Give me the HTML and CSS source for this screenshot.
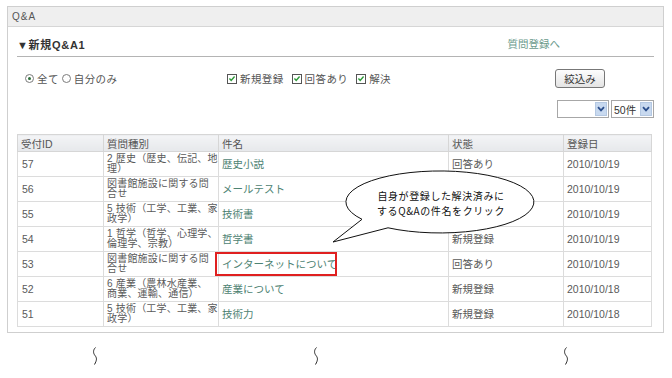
FILE: index.html
```html
<!DOCTYPE html>
<html lang="ja">
<head>
<meta charset="utf-8">
<title>Q&amp;A</title>
<link rel="stylesheet" href="styles.css">
</head>
<body>
<div class="page">
  <div class="panel">
    <div class="panel-head">Q&amp;A</div>
    <div class="panel-body">
      <div class="section-title">
        <span class="title">▼新規Q&amp;A1</span>
        <a class="link reg">質問登録へ</a>
      </div>
      <div class="filter">
        <div class="radios">
          <label class="opt"><span class="radio on"></span>全て</label>
          <label class="opt"><span class="radio"></span>自分のみ</label>
        </div>
        <div class="checks">
          <label class="opt"><span class="check"><svg viewBox="0 0 9 9" width="9" height="9"><path d="M1.6 4.6 L3.6 6.6 L7.4 2.2" fill="none" stroke="#2f9a3a" stroke-width="1.6"/></svg></span>新規登録</label>
          <label class="opt"><span class="check"><svg viewBox="0 0 9 9" width="9" height="9"><path d="M1.6 4.6 L3.6 6.6 L7.4 2.2" fill="none" stroke="#2f9a3a" stroke-width="1.6"/></svg></span>回答あり</label>
          <label class="opt"><span class="check"><svg viewBox="0 0 9 9" width="9" height="9"><path d="M1.6 4.6 L3.6 6.6 L7.4 2.2" fill="none" stroke="#2f9a3a" stroke-width="1.6"/></svg></span>解決</label>
        </div>
        <button class="btn">絞込み</button>
      </div>
      <div class="selects">
        <div class="sel w1"><span class="val"></span><span class="arrow"><svg viewBox="0 0 8 6" width="8" height="6"><path d="M1 1.2 L4 4.4 L7 1.2" fill="none" stroke="#2c4f8c" stroke-width="1.8"/></svg></span></div>
        <div class="sel w2"><span class="val">50件</span><span class="arrow"><svg viewBox="0 0 8 6" width="8" height="6"><path d="M1 1.2 L4 4.4 L7 1.2" fill="none" stroke="#2c4f8c" stroke-width="1.8"/></svg></span></div>
      </div>
      <table class="list">
        <colgroup>
          <col class="c1"><col class="c2"><col class="c3"><col class="c4"><col class="c5">
        </colgroup>
        <thead>
          <tr><th>受付ID</th><th>質問種別</th><th>件名</th><th>状態</th><th>登録日</th></tr>
        </thead>
        <tbody>
          <tr><td>57</td><td class="kind">2 歴史（歴史、伝記、地<br>理）</td><td><a class="link">歴史小説</a></td><td>回答あり</td><td>2010/10/19</td></tr>
          <tr><td>56</td><td class="kind">図書館施設に関する問<br>合せ</td><td><a class="link">メールテスト</a></td><td></td><td>2010/10/19</td></tr>
          <tr><td>55</td><td class="kind">5 技術（工学、工業、家<br>政学）</td><td><a class="link">技術書</a></td><td></td><td>2010/10/19</td></tr>
          <tr><td>54</td><td class="kind">1 哲学（哲学、心理学、<br>倫理学、宗教）</td><td><a class="link">哲学書</a></td><td>新規登録</td><td>2010/10/19</td></tr>
          <tr><td>53</td><td class="kind">図書館施設に関する問<br>合せ</td><td class="mark"><a class="link">インターネットについて</a><span class="hilite"></span></td><td>回答あり</td><td>2010/10/19</td></tr>
          <tr><td>52</td><td class="kind">6 産業（農林水産業、<br>商業、運輸、通信）</td><td><a class="link">産業について</a></td><td>新規登録</td><td>2010/10/18</td></tr>
          <tr><td>51</td><td class="kind">5 技術（工学、工業、家<br>政学）</td><td><a class="link">技術力</a></td><td>新規登録</td><td>2010/10/18</td></tr>
        </tbody>
      </table>
    </div>
  </div>
  <div class="breaks">
    <svg class="brk b1" viewBox="0 0 6 18" width="6" height="18"><path d="M3.5 0.5 C1 3, 1 6, 3 8.5 S 5 13, 2.5 17.5" fill="none" stroke="#222" stroke-width="1"/></svg>
    <svg class="brk b2" viewBox="0 0 6 18" width="6" height="18"><path d="M3.5 0.5 C1 3, 1 6, 3 8.5 S 5 13, 2.5 17.5" fill="none" stroke="#222" stroke-width="1"/></svg>
    <svg class="brk b3" viewBox="0 0 6 18" width="6" height="18"><path d="M3.5 0.5 C1 3, 1 6, 3 8.5 S 5 13, 2.5 17.5" fill="none" stroke="#222" stroke-width="1"/></svg>
  </div>
  <div class="bubble">
    <svg class="bubble-shape" viewBox="0 0 210 80" width="210" height="80">
      <path d="M32 51.3 L3 74 L58 59.8 A94 31 0 1 0 32 51.3 Z" fill="#fff" stroke="#111" stroke-width="1"/>
    </svg>
    <div class="bubble-text">自身が登録した解決済みに<br>するQ&amp;Aの件名をクリック</div>
  </div>
</div>
</body>
</html>
```

FILE: styles.css
```css
* { box-sizing: border-box; }
html, body { margin: 0; padding: 0; background: #fff; }
body {
  font-family: "Liberation Sans", "Noto Sans CJK JP", sans-serif;
  font-size: 11px;
  color: #555;
}
.page {
  position: relative;
  width: 672px;
  height: 378px;
  padding-top: 6px;
}
.panel {
  margin-left: 7px;
  width: 657px;
  border: 1px solid #cfcfcf;
}
.panel-head {
  height: 20px;
  line-height: 20px;
  padding-left: 4px;
  background: #efefef;
  border-bottom: 1px solid #d6d6d6;
  font-size: 10px;
  letter-spacing: 1px;
  color: #555;
}
.panel-body {
  padding: 0 11px 5px 9px;
}
.section-title {
  display: flex;
  align-items: center;
  height: 30px;
  padding-top: 4px;
  border-bottom: 1px solid #b4b4b4;
  margin-right: -2px;
}
.title {
  font-weight: bold;
  font-size: 11px;
  letter-spacing: 0.7px;
  color: #333;
}
.link { color: #4e8373; text-decoration: none; }
.reg {
  margin-left: auto;
  margin-right: 94px;
  font-size: 10.5px;
  color: #6b9a8c;
}
.filter {
  display: flex;
  align-items: center;
  height: 19px;
  margin-top: 12px;
  padding-left: 8px;
}
.radios { display: flex; width: 202px; gap: 3px; }
.checks { display: flex; gap: 8px; }
.opt {
  display: flex;
  align-items: center;
  gap: 3px;
  font-size: 10.5px;
  letter-spacing: 0.4px;
  color: #555;
}
.radio {
  width: 9px;
  height: 9px;
  border: 1px solid #7c7c7c;
  border-radius: 50%;
  background: #fff;
  position: relative;
}
.radio.on::after {
  content: "";
  position: absolute;
  left: 2px;
  top: 2px;
  width: 3px;
  height: 3px;
  border-radius: 50%;
  background: #2c6e3a;
}
.check {
  width: 10px;
  height: 10px;
  border: 1px solid #555;
  background: #fff;
  display: flex;
  align-items: center;
  justify-content: center;
}
.check svg { display: block; }
.btn {
  margin-left: auto;
  margin-right: 47px;
  width: 50px;
  height: 19px;
  padding: 0;
  border: 1px solid #777;
  border-radius: 3px;
  background: linear-gradient(#fdfdfd, #e4e4e4);
  font-family: "Noto Sans CJK JP", sans-serif;
  font-size: 10.5px;
  color: #333;
}
.selects {
  display: flex;
  justify-content: flex-end;
  gap: 2px;
  margin-top: 12px;
  margin-right: -2px;
  height: 18px;
}
.sel {
  display: flex;
  align-items: center;
  height: 18px;
  border: 1px solid #a7a7a7;
  background: #fff;
  padding: 1px;
}
.sel.w1 { width: 52px; }
.sel.w2 { width: 43px; }
.sel .val {
  flex: 1;
  font-size: 10.5px;
  color: #333;
  padding-left: 1px;
}
.arrow {
  width: 12px;
  height: 14px;
  background: #c8d9ef;
  border: 1px solid #b4c8e2;
  display: flex;
  align-items: center;
  justify-content: center;
}
.arrow svg { display: block; }
.list {
  margin-top: 16px;
  width: 634px;
  border-collapse: collapse;
  table-layout: fixed;
  border: 1px solid #d2d2d2;
}
.c1 { width: 86px; }
.c2 { width: 115px; }
.c3 { width: 230px; }
.c4 { width: 115px; }
.c5 { width: 88px; }
.list th {
  height: 17px;
  padding: 0 3px;
  text-align: left;
  font-weight: normal;
  font-size: 10.5px;
  color: #555;
  background: linear-gradient(#f3f4f6, #e6e8eb);
  border: 1px solid #d6d6d6;
}
.list td {
  height: 25px;
  padding: 0 3px;
  font-size: 10.5px;
  line-height: 11px;
  color: #5a5a5a;
  border: 1px solid #dcdcdc;
  vertical-align: middle;
  white-space: nowrap;
}
.list td.kind {
  font-size: 10px;
  line-height: 10.5px;
  letter-spacing: 0.2px;
}
.list td:first-child { padding-left: 4px; }
.mark { position: relative; }
.hilite {
  position: absolute;
  left: -4px;
  top: 0;
  width: 122px;
  height: 24px;
  border: 2px solid #e02020;
}
.breaks {
  display: flex;
  margin-top: 14px;
  height: 18px;
}
.brk { display: block; }
.b1 { margin-left: 92px; }
.b2 { margin-left: 215px; }
.b3 { margin-left: 244px; }
.bubble {
  position: absolute;
  left: 330px;
  top: 168px;
  width: 210px;
  height: 80px;
}
.bubble-shape { position: absolute; left: 0; top: 0; }
.bubble-text {
  position: absolute;
  left: 36px;
  top: 20px;
  width: 150px;
  text-align: center;
  font-family: "Noto Sans CJK JP", sans-serif;
  font-size: 10px;
  line-height: 15px;
  letter-spacing: 0.6px;
  color: #111;
}
```
